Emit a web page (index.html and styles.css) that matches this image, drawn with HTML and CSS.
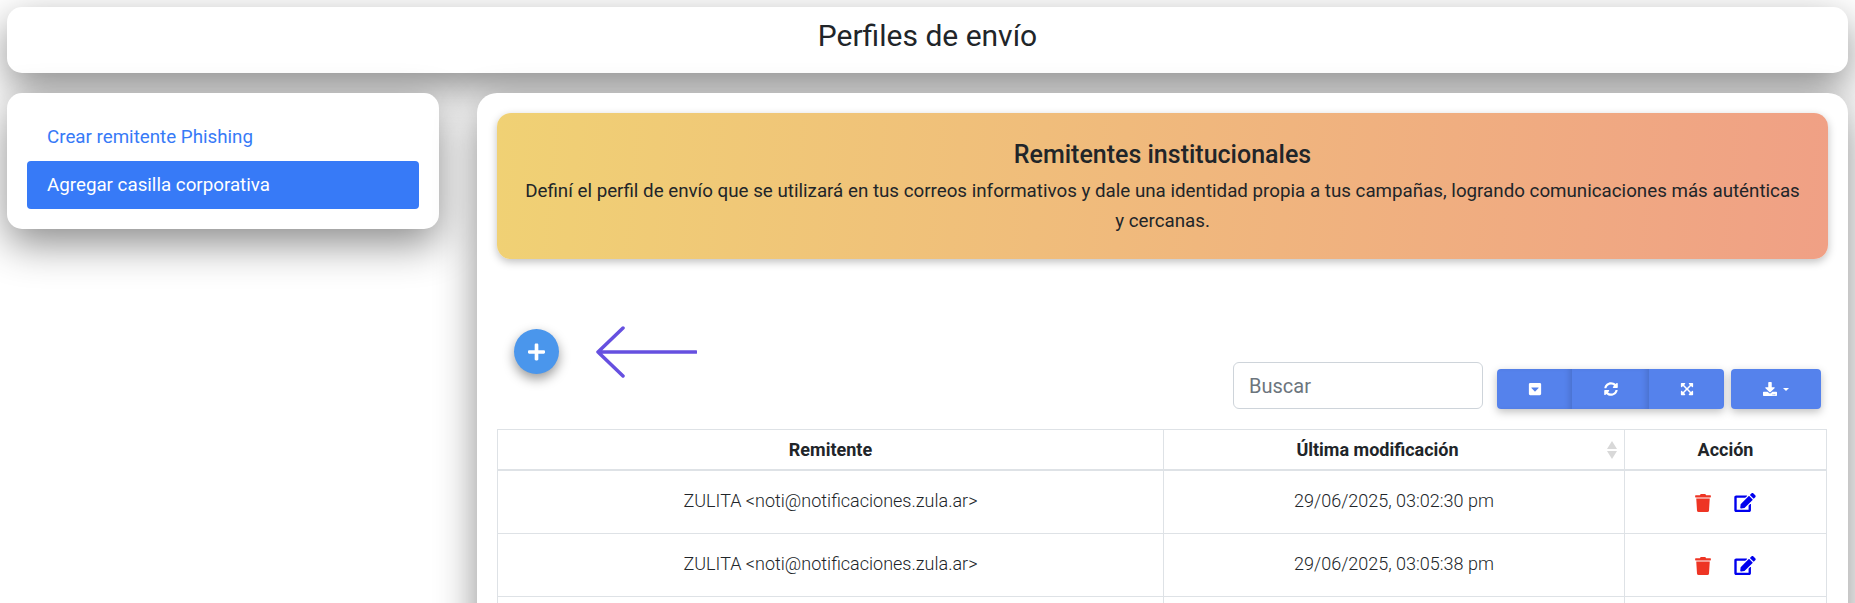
FILE: index.html
```html
<!DOCTYPE html>
<html lang="es">
<head>
    <meta charset="UTF-8">
    <meta name="viewport" content="width=device-width, initial-scale=1.0">
    <title>Perfiles de envío</title>
    <link rel="stylesheet" href="styles.css">
</head>
<body>

    <!-- Iconos -->
    <svg class="icon-sprite" aria-hidden="true">
        <symbol id="i-trash" viewBox="0 0 448 512"><path d="M432 32H312l-9.4-18.7A24 24 0 0 0 281.1 0H166.8a23.72 23.72 0 0 0-21.4 13.3L136 32H16A16 16 0 0 0 0 48v32a16 16 0 0 0 16 16h416a16 16 0 0 0 16-16V48a16 16 0 0 0-16-16zM53.2 467a48 48 0 0 0 47.9 45h245.8a48 48 0 0 0 47.9-45L416 128H32z"/></symbol>
        <symbol id="i-edit" viewBox="0 0 576 512"><path d="M402.6 83.2l90.2 90.2c3.8 3.8 3.8 10 0 13.8L274.4 405.6l-92.8 10.3c-12.4 1.4-22.9-9.1-21.5-21.5l10.3-92.8L388.8 83.2c3.8-3.8 10-3.8 13.8 0zm162-22.9l-48.8-48.8c-15.2-15.2-39.9-15.2-55.2 0l-35.4 35.4c-3.8 3.8-3.8 10 0 13.8l90.2 90.2c3.8 3.8 10 3.8 13.8 0l35.4-35.4c15.2-15.3 15.2-40 0-55.2zM384 346.2V448H64V128h229.8c3.2 0 6.2-1.3 8.5-3.5l40-40c7.6-7.6 2.2-20.5-8.5-20.5H48C21.5 64 0 85.5 0 112v352c0 26.5 21.5 48 48 48h352c26.5 0 48-21.5 48-48V306.2c0-10.7-12.9-16-20.5-8.5l-40 40c-2.2 2.3-3.5 5.3-3.5 8.5z"/></symbol>
        <symbol id="i-caret" viewBox="0 0 448 512"><path d="M448 80v352c0 26.5-21.5 48-48 48H48c-26.5 0-48-21.5-48-48V80c0-26.5 21.5-48 48-48h352c26.5 0 48 21.5 48 48zM92.5 220.5l123 123c4.7 4.7 12.3 4.7 17 0l123-123c7.6-7.6 2.2-20.5-8.5-20.5H101c-10.7 0-16.1 12.9-8.5 20.5z"/></symbol>
        <symbol id="i-sync" viewBox="0 0 512 512"><path d="M370.72 133.28C339.458 104.008 298.888 87.962 255.848 88c-77.458.068-144.328 53.178-162.791 126.85-1.344 5.363-6.122 9.15-11.651 9.15H24.103c-7.498 0-13.194-6.807-11.807-14.176C33.933 94.924 134.813 8 256 8c66.448 0 126.791 26.136 171.315 68.685L463.03 40.97C478.149 25.851 504 36.559 504 57.941V192c0 13.255-10.745 24-24 24H345.941c-21.382 0-32.09-25.851-16.971-40.971l41.75-41.749zM32 296h134.059c21.382 0 32.09 25.851 16.971 40.971l-41.75 41.75c31.262 29.273 71.835 45.319 114.876 45.28 77.418-.07 144.315-53.144 162.787-126.849 1.344-5.363 6.122-9.15 11.651-9.15h57.304c7.498 0 13.194 6.807 11.807 14.176C478.067 417.076 377.187 504 256 504c-66.448 0-126.791-26.136-171.315-68.685L48.97 471.03C33.851 486.149 8 475.441 8 454.059V320c0-13.255 10.745-24 24-24z"/></symbol>
        <symbol id="i-expand" viewBox="0 0 448 512"><path d="M448 344v112a23.94 23.94 0 0 1-24 24H312c-21.39 0-32.09-25.9-17-41l36.2-36.2L224 295.6 116.77 402.9 153 439c15.09 15.1 4.39 41-17 41H24a23.94 23.94 0 0 1-24-24V344c0-21.4 25.89-32.1 41-17l36.19 36.2L184.46 256 77.18 148.7 41 185c-15.1 15.1-41 4.4-41-17V56a23.94 23.94 0 0 1 24-24h112c21.39 0 32.09 25.9 17 41l-36.2 36.2L224 216.4l107.23-107.3L295 73c-15.09-15.1-4.39-41 17-41h112a23.94 23.94 0 0 1 24 24v112c0 21.4-25.89 32.1-41 17l-36.19-36.2L263.54 256l107.28 107.3L407 327.1c15.1-15.2 41-4.5 41 16.9z"/></symbol>
        <symbol id="i-download" viewBox="0 0 512 512"><path d="M216 0h80c13.3 0 24 10.7 24 24v168h87.7c17.8 0 26.7 21.5 14.1 34.1L269.7 378.3c-7.5 7.5-19.8 7.5-27.3 0L90.1 226.1c-12.6-12.6-3.7-34.1 14.1-34.1H192V24c0-13.3 10.7-24 24-24zm296 376v112c0 13.3-10.7 24-24 24H24c-13.3 0-24-10.7-24-24V376c0-13.3 10.7-24 24-24h146.7l49 49c20.1 20.1 52.5 20.1 72.6 0l49-49H488c13.3 0 24 10.7 24 24zm-124 88c0-11-9-20-20-20s-20 9-20 20 9 20 20 20 20-9 20-20zm64 0c0-11-9-20-20-20s-20 9-20 20 9 20 20 20 20-9 20-20z"/></symbol>
        <symbol id="i-plus" viewBox="0 0 448 512"><path d="M416 208H272V64c0-17.67-14.33-32-32-32h-32c-17.67 0-32 14.33-32 32v144H32c-17.67 0-32 14.33-32 32v32c0 17.67 14.33 32 32 32h144v144c0 17.67 14.33 32 32 32h32c17.67 0 32-14.33 32-32V304h144c17.67 0 32-14.33 32-32v-32c0-17.67-14.33-32-32-32z"/></symbol>
    </svg>

    <!-- Encabezado -->
    <header class="page-header">
        <h1>Perfiles de envío</h1>
    </header>

    <div class="layout">
        <!-- Menu lateral -->
        <nav class="side-menu">
            <a href="#" class="side-link">Crear remitente Phishing</a>
            <a href="#" class="side-link active">Agregar casilla corporativa</a>
        </nav>

        <!-- Contenido principal -->
        <main class="content">
            <section class="banner">
                <h2>Remitentes institucionales</h2>
                <p>Definí el perfil de envío que se utilizará en tus correos informativos y dale una identidad propia a tus campañas, logrando comunicaciones más auténticas y cercanas.</p>
            </section>

            <div class="toolbar">
                <div class="toolbar-left">
                    <button class="fab" aria-label="Agregar"><svg class="icon"><use href="#i-plus"/></svg></button>
                    <svg class="arrow" viewBox="0 0 101 52" aria-hidden="true">
                        <path d="M100 26H2M27 2L2 26l25 24"/>
                    </svg>
                </div>
                <div class="toolbar-right">
                    <input type="text" class="search" placeholder="Buscar">
                    <div class="btn-group">
                        <button class="tool-btn"><svg class="icon"><use href="#i-caret"/></svg></button>
                        <button class="tool-btn mid"><svg class="icon"><use href="#i-sync"/></svg></button>
                        <button class="tool-btn"><svg class="icon"><use href="#i-expand"/></svg></button>
                    </div>
                    <button class="tool-btn export"><svg class="icon"><use href="#i-download"/></svg><span class="caret"></span></button>
                </div>
            </div>

            <table class="data-table">
                <thead>
                    <tr>
                        <th class="col-sender">Remitente</th>
                        <th class="col-date sortable">Última modificación</th>
                        <th class="col-action">Acción</th>
                    </tr>
                </thead>
                <tbody>
                    <tr>
                        <td>ZULITA &lt;noti@notificaciones.zula.ar&gt;</td>
                        <td>29/06/2025, 03:02:30 pm</td>
                        <td><div class="actions"><svg class="icon trash"><use href="#i-trash"/></svg><svg class="icon edit"><use href="#i-edit"/></svg></div></td>
                    </tr>
                    <tr>
                        <td>ZULITA &lt;noti@notificaciones.zula.ar&gt;</td>
                        <td>29/06/2025, 03:05:38 pm</td>
                        <td><div class="actions"><svg class="icon trash"><use href="#i-trash"/></svg><svg class="icon edit"><use href="#i-edit"/></svg></div></td>
                    </tr>
                    <tr>
                        <td></td>
                        <td></td>
                        <td></td>
                    </tr>
                </tbody>
            </table>
        </main>
    </div>

</body>
</html>
```

FILE: styles.css
```css
/* Estilos generales */
html, body {
    height: 100%;
    overflow: hidden;
}

body {
    margin: 0;
    padding: 7px;
    box-sizing: border-box;
    font-family: Roboto, "Liberation Sans", sans-serif;
    color: #212529;
    background-color: #fff;
}

.icon-sprite {
    display: none;
}

.icon {
    display: block;
    fill: currentColor;
}

/* Encabezado */
.page-header {
    height: 66px;
    padding-bottom: 10px;
    box-sizing: border-box;
    display: flex;
    align-items: center;
    justify-content: center;
    background-color: #fff;
    border-radius: 15px;
    box-shadow: 0 15px 40px rgba(0, 0, 0, 0.45);
}

.page-header h1 {
    margin: 0;
    font-size: 30px;
    font-weight: 400;
}

/* Layout */
.layout {
    display: flex;
    align-items: flex-start;
    gap: 38px;
    margin-top: 20px;
}

/* Menu lateral */
.side-menu {
    width: 392px;
    flex-shrink: 0;
    padding: 20px;
    background-color: #fff;
    border-radius: 15px;
    box-shadow: 0 15px 40px rgba(0, 0, 0, 0.45);
}

.side-link {
    display: block;
    height: 48px;
    line-height: 48px;
    padding: 0 20px;
    font-size: 18.75px;
    color: #377af7;
    text-decoration: none;
    border-radius: 4px;
}

.side-link.active {
    background-color: #377af7;
    color: #fff;
}

/* Contenido */
.content {
    flex: 1;
    min-width: 0;
    height: 620px;
    padding: 20px;
    background-color: #fff;
    border-radius: 20px;
    box-shadow: 0 15px 40px rgba(0, 0, 0, 0.45);
}

.banner {
    height: 146px;
    box-sizing: border-box;
    padding: 27px 24px 0;
    text-align: center;
    border-radius: 14px;
    background: linear-gradient(95deg, #f0d174, #f0a085);
    box-shadow: 0 3px 8px rgba(0, 0, 0, 0.25);
}

.banner h2 {
    margin: 0 0 7px;
    font-size: 25px;
    font-weight: 500;
    line-height: 29px;
}

.banner p {
    margin: 0;
    font-size: 18.75px;
    line-height: 30px;
}

/* Barra de herramientas */
.toolbar {
    display: flex;
    justify-content: space-between;
    height: 83px;
    margin-top: 67px;
    margin-bottom: 20px;
}

.toolbar-left {
    display: flex;
    align-items: flex-start;
    gap: 37px;
    padding-left: 17px;
}

.fab {
    width: 45px;
    height: 45px;
    margin-top: 3px;
    padding: 0;
    display: flex;
    align-items: center;
    justify-content: center;
    border: none;
    border-radius: 50%;
    color: #fff;
    background-color: #4a96ec;
    box-shadow: 0 5px 12px rgba(0, 0, 0, 0.4);
}

.fab .icon {
    width: 17px;
    height: 20px;
}

.arrow {
    width: 101px;
    height: 52px;
    fill: none;
    stroke: #6650e0;
    stroke-width: 3.5;
    stroke-linecap: round;
    stroke-linejoin: round;
}

.toolbar-right {
    display: flex;
    align-items: flex-end;
    padding-right: 7px;
}

.search {
    width: 250px;
    height: 47px;
    box-sizing: border-box;
    margin-right: 14px;
    padding: 0 15px;
    font-family: inherit;
    font-size: 20px;
    border: 1px solid #ced4da;
    border-radius: 6px;
}

.search::placeholder {
    color: #6c757d;
}

.btn-group {
    display: flex;
    margin-right: 7px;
    border-radius: 4px;
    box-shadow: 0 3px 8px rgba(0, 0, 0, 0.25);
}

.tool-btn {
    height: 40px;
    width: 75px;
    padding: 0;
    display: flex;
    align-items: center;
    justify-content: center;
    border: none;
    color: #fff;
    background-color: #5582ec;
}

.tool-btn .icon {
    width: 14px;
    height: 14px;
}

.btn-group .tool-btn:first-child {
    border-radius: 4px 0 0 4px;
    box-shadow: inset -5px 0 6px -3px rgba(0, 0, 0, 0.15);
}

.btn-group .tool-btn:last-child {
    border-radius: 0 4px 4px 0;
}

.tool-btn.mid {
    width: 77px;
    box-shadow: inset -5px 0 6px -3px rgba(0, 0, 0, 0.15);
}

.tool-btn.export {
    width: 90px;
    border-radius: 4px;
    box-shadow: 0 3px 8px rgba(0, 0, 0, 0.25);
}

.caret {
    margin-left: 6px;
    border-top: 3px solid #fff;
    border-left: 3px solid transparent;
    border-right: 3px solid transparent;
}

/* Tabela */
.data-table {
    width: 1330px;
    table-layout: fixed;
    border-collapse: collapse;
    font-size: 18px;
}

.data-table th,
.data-table td {
    border: 1px solid #dee2e6;
    text-align: center;
    vertical-align: middle;
}

.data-table th {
    height: 39px;
    padding: 0;
    font-weight: 700;
    border-bottom-width: 2px;
}

.data-table td {
    height: 63px;
    padding: 0 0 3px;
    box-sizing: border-box;
    font-weight: 300;
}

.col-sender {
    width: 665px;
}

.col-date {
    width: 427px;
}

.data-table th.sortable {
    position: relative;
    padding-right: 33px;
}

.sortable::before,
.sortable::after {
    content: "";
    position: absolute;
    right: 7px;
    border-left: 5px solid transparent;
    border-right: 5px solid transparent;
}

.sortable::before {
    top: 11px;
    border-bottom: 8px solid #d8d8d8;
}

.sortable::after {
    top: 21px;
    border-top: 8px solid #d8d8d8;
}

.actions {
    display: flex;
    align-items: center;
    justify-content: center;
    gap: 23px;
    margin-top: 5px;
}

.trash {
    width: 16px;
    height: 18px;
    color: #ee3524;
}

.edit {
    width: 22px;
    height: 19px;
    color: #0000ee;
}
```
